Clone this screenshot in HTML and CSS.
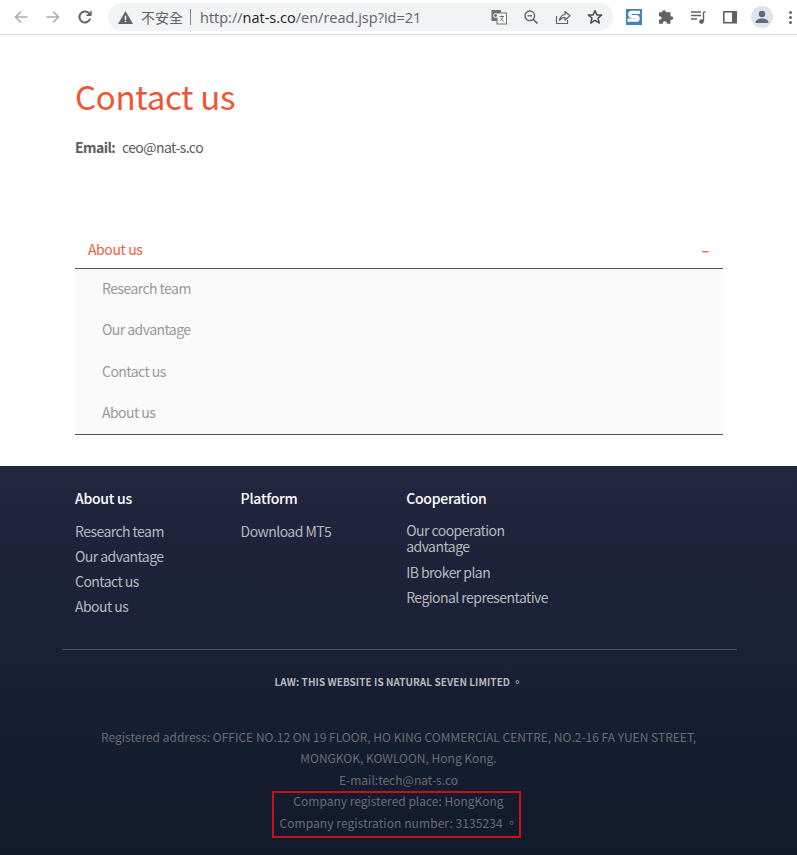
FILE: index.html
```html
<!DOCTYPE html>
<html lang="en">
<head>
  <meta charset="UTF-8">
  <meta name="viewport" content="width=device-width, initial-scale=1.0">
  <title>Contact us</title>
  <link rel="stylesheet" href="styles.css">
</head>
<body>

<div class="toolbar">
  <svg class="tool-icon" viewBox="0 0 16 16"><path d="M14.5 8H2.5M8 2.5L2.5 8L8 13.5" fill="none" stroke="#a9acb0" stroke-width="1.6"/></svg>
  <svg class="tool-icon" viewBox="0 0 16 16"><path d="M1.5 8H13.5M8 2.5L13.5 8L8 13.5" fill="none" stroke="#a9acb0" stroke-width="1.6"/></svg>
  <svg class="tool-icon" viewBox="0 0 16 16"><path d="M13.2 9.5A5.5 5.5 0 1 1 12 4.2" fill="none" stroke="#5f6368" stroke-width="2"/><path d="M14.6 1.2V7H8.8z" fill="#5f6368"/></svg>

  <div class="omnibox">
    <svg class="warn" viewBox="0 0 16 16"><path d="M8 1L16 15H0z" fill="#5f6368"/><rect x="7.2" y="6" width="1.6" height="4.6" fill="#f1f3f4"/><rect x="7.2" y="11.4" width="1.6" height="1.6" fill="#f1f3f4"/></svg>
    <span class="not-secure">不安全</span>
    <span class="url"><span class="url-dim">http://</span>nat-s.co<span class="url-dim">/en/read.jsp?id=21</span></span>
    <div class="omni-icons">
      <svg class="omni-icon" viewBox="0 0 16 16"><rect x="0.5" y="1" width="9.5" height="11" fill="#6b7074"/><rect x="6" y="4" width="9.5" height="11" fill="#fff" stroke="#6b7074"/><circle cx="4.6" cy="6.5" r="2" fill="none" stroke="#fff"/><path d="M8.5 7.5H13M10.7 6.5V7.5M12 7.5C11.5 10 10 11.5 8.8 12M9.8 9C10.5 10.5 11.8 11.8 13 12.3" fill="none" stroke="#6b7074"/></svg>
      <svg class="omni-icon" viewBox="0 0 16 16"><circle cx="6.8" cy="6.8" r="4.8" fill="none" stroke="#5f6368" stroke-width="1.4"/><path d="M10.2 10.2L14.5 14.5" stroke="#5f6368" stroke-width="1.6"/><path d="M4.5 6.8H9.1" stroke="#5f6368" stroke-width="1.3"/></svg>
      <svg class="omni-icon" viewBox="0 0 16 16"><path d="M1.5 7V14.5H12.5V11" fill="none" stroke="#5f6368" stroke-width="1.2"/><path d="M4.5 11.5C5 8 7 5.8 10 5.5V2.5L15 6.8L10 11V8.3C7.8 8.3 6 9.3 4.5 11.5z" fill="none" stroke="#5f6368" stroke-width="1.2" stroke-linejoin="round"/></svg>
      <svg class="omni-icon" viewBox="0 0 16 16"><path d="M8 1.6L9.9 6H14.8L11 9.1L12.3 14L8 11.3L3.7 14L5 9.1L1.2 6H6.1z" fill="none" stroke="#4a4e52" stroke-width="1.5" stroke-linejoin="round"/></svg>
    </div>
  </div>

  <div class="extensions">
    <svg class="ext-s" viewBox="0 0 16 16"><rect width="16" height="16" fill="#3d85bd"/><path d="M14 3.4H6C3 3.4 3 7.7 6 7.7H10.5C12.6 7.7 12.6 11.2 10.5 11.2H1.5" fill="none" stroke="#fff" stroke-width="3.2"/></svg>
    <svg class="ext-icon" viewBox="0 0 16 16"><path d="M6 1.2C7.4 1.2 8 2 8 3.2H12.5V7.2C14 6.9 15.2 7.6 15.2 9S14 11.2 12.5 10.8V14.8H8.8C9 13.2 8.2 12.2 6.8 12.2S4.6 13.2 4.8 14.8H1V10.6C2.6 11 3.6 10.2 3.6 9S2.6 7 1 7.4V3.2H4C4 2 4.6 1.2 6 1.2z" fill="#5f6368"/></svg>
    <svg class="ext-icon" viewBox="0 0 16 16"><path d="M1 3H11M1 6.5H11M1 10H7" stroke="#5f6368" stroke-width="1.3"/><path d="M13.5 3V12.5" stroke="#5f6368" stroke-width="1.4"/><path d="M13.5 3H15.5" stroke="#5f6368" stroke-width="1.4"/><circle cx="11.5" cy="12.6" r="2.3" fill="#5f6368"/></svg>
    <svg class="ext-icon" viewBox="0 0 16 16"><rect x="1" y="2" width="14" height="12.5" fill="#5f6368"/><rect x="2.6" y="3.6" width="7.4" height="9.3" fill="#fff"/></svg>
    <div class="avatar">
      <svg viewBox="0 0 16 16"><circle cx="8" cy="5" r="3.2" fill="#5b6b82"/><path d="M1.5 14C1.5 10.6 5 9.5 8 9.5S14.5 10.6 14.5 14z" fill="#5b6b82"/></svg>
    </div>
    <div class="kebab"><i></i><i></i><i></i></div>
  </div>
</div>

<div class="content">
  <h1>Contact us</h1>
  <p class="email"><strong>Email:</strong> ceo@nat-s.co</p>

  <div class="side-title">
    <span>About us</span>
    <span class="side-toggle">–</span>
  </div>
  <ul class="side-list">
    <li>Research team</li>
    <li>Our advantage</li>
    <li>Contact us</li>
    <li>About us</li>
  </ul>
</div>

<footer>
  <div class="foot-cols">
    <div class="foot-col">
      <h4>About us</h4>
      <a>Research team</a>
      <a>Our advantage</a>
      <a>Contact us</a>
      <a>About us</a>
    </div>
    <div class="foot-col">
      <h4>Platform</h4>
      <a>Download MT5</a>
    </div>
    <div class="foot-col foot-col-wide">
      <h4>Cooperation</h4>
      <a class="wrap">Our cooperation<br>advantage</a>
      <a class="wrap">IB broker plan</a>
      <a class="wrap">Regional representative</a>
    </div>
  </div>

  <div class="foot-bottom">
    <p class="law">LAW: THIS WEBSITE IS NATURAL SEVEN LIMITED 。</p>
    <div class="address">
      <p>Registered address: OFFICE NO.12 ON 19 FLOOR, HO KING COMMERCIAL CENTRE, NO.2-16 FA YUEN STREET,<br>MONGKOK, KOWLOON, Hong Kong.</p>
      <p>E-mail:tech@nat-s.co</p>
      <p>Company registered place: HongKong</p>
      <p class="reg-number">Company registration number: 3135234 。</p>
    </div>
  </div>
  <div class="red-box"></div>
</footer>

</body>
</html>
```

FILE: styles.css
```css
html, body {
  height: 855px;
  overflow: hidden;
}
body {
  margin: 0;
  background-color: #fff;
  font-family: "Noto Sans CJK TC", "Noto Sans", sans-serif;
  font-size: 14px;
  color: #555;
}

/* browser bar */
.toolbar {
  display: flex;
  align-items: center;
  height: 34px;
  border-bottom: 1px solid #dadce0;
  padding-left: 13px;
  box-sizing: content-box;
  font-family: "Open Sans", "Noto Sans CJK TC", sans-serif;
}
.tool-icon {
  width: 16px;
  height: 16px;
  margin-right: 16px;
  flex: none;
}
.omnibox {
  display: flex;
  align-items: center;
  width: 505px;
  height: 28px;
  margin-left: -1px;
  padding-left: 10px;
  box-sizing: border-box;
  background-color: #f1f3f4;
  border-radius: 14px;
}
.warn {
  width: 15px;
  height: 15px;
  flex: none;
}
.not-secure {
  margin-left: 8px;
  padding-right: 7px;
  border-right: 1px solid #80868b;
  font-family: "Noto Sans CJK TC", sans-serif;
  font-size: 14px;
  line-height: 16px;
  color: #5f6368;
}
.url {
  margin-left: 9px;
  font-size: 14.5px;
  color: #202124;
}
.url-dim {
  color: #5f6368;
}
.omni-icons {
  display: flex;
  align-items: center;
  gap: 16px;
  margin-left: auto;
  margin-right: 10px;
}
.omni-icon {
  width: 16px;
  height: 16px;
}
.extensions {
  display: flex;
  align-items: center;
  margin-left: 13px;
}
.ext-s {
  width: 16px;
  height: 16px;
  margin-right: 16px;
}
.ext-icon {
  width: 16px;
  height: 16px;
  margin-right: 16px;
}
.avatar {
  width: 22px;
  height: 22px;
  margin-left: -3px;
  padding: 3px;
  box-sizing: border-box;
  background-color: #dfe3ea;
  border-radius: 50%;
}
.avatar svg {
  display: block;
}
.kebab {
  display: flex;
  flex-direction: column;
  gap: 2px;
  margin-left: 16px;
}
.kebab i {
  width: 3px;
  height: 3px;
  background-color: #5f6368;
  border-radius: 50%;
}

/* page */
.content {
  height: 431px;
  padding: 0 74px 0 75px;
  box-sizing: border-box;
  overflow: hidden;
}
h1 {
  margin: 36px 0 0;
  font-size: 33px;
  font-weight: 400;
  letter-spacing: -0.3px;
  line-height: 50px;
  color: #ee5535;
}
.email {
  margin: 16px 0 0;
  line-height: 20px;
  letter-spacing: -0.55px;
  color: #5c5c60;
}
.email strong {
  margin-right: 4px;
}
.side-title {
  display: flex;
  justify-content: space-between;
  height: 37px;
  margin-top: 73px;
  padding: 1px 14px 0 13px;
  border-bottom: 1px solid #555;
  line-height: 36px;
  letter-spacing: -0.4px;
  color: #ee5f3c;
}
.side-toggle {
  font-weight: 700;
  line-height: 38px;
}
.side-list {
  margin: 0;
  padding: 0 0 0 27px;
  list-style: none;
  background-color: #fafafa;
  border-bottom: 1px solid #555;
}
.side-list li {
  height: 41.3px;
  line-height: 39.5px;
  letter-spacing: -0.55px;
  color: #999;
}

/* footer */
footer {
  position: relative;
  height: 389px;
  background: linear-gradient(#22263f, #111a2b);
  overflow: hidden;
}
.foot-cols {
  display: flex;
  height: 183px;
  margin: 0 60px 0 62px;
  padding-left: 13px;
  border-bottom: 1px solid #4a4e60;
}
.foot-col {
  width: 165.6px;
  padding-top: 22px;
}
.foot-col-wide {
  width: 170px;
}
.foot-col h4 {
  margin: 0 0 12px;
  font-size: 14px;
  font-weight: 500;
  letter-spacing: -0.25px;
  line-height: 20px;
  color: #fff;
}
.foot-col a {
  display: block;
  height: 25px;
  line-height: 23px;
  letter-spacing: -0.55px;
  color: #b8b8bd;
}
.foot-col a.wrap {
  height: auto;
  line-height: 16px;
  margin-bottom: 9.5px;
}
.foot-col a.wrap:first-of-type {
  padding-top: 2px;
}
.foot-bottom {
  text-align: center;
}
.law {
  margin: 22px 0 0;
  font-size: 10px;
  font-weight: 700;
  letter-spacing: 0.05px;
  line-height: 20px;
  color: #b9b9bd;
}
.address {
  margin-top: 33.7px;
  font-size: 12px;
  color: #6a6c75;
}
.address p {
  margin: 0;
  line-height: 21.5px;
}
.address .reg-number {
  letter-spacing: 0.07px;
}
.red-box {
  position: absolute;
  left: 272px;
  top: 325px;
  width: 245px;
  height: 43px;
  border: 2px solid #c8101e;
}
```
